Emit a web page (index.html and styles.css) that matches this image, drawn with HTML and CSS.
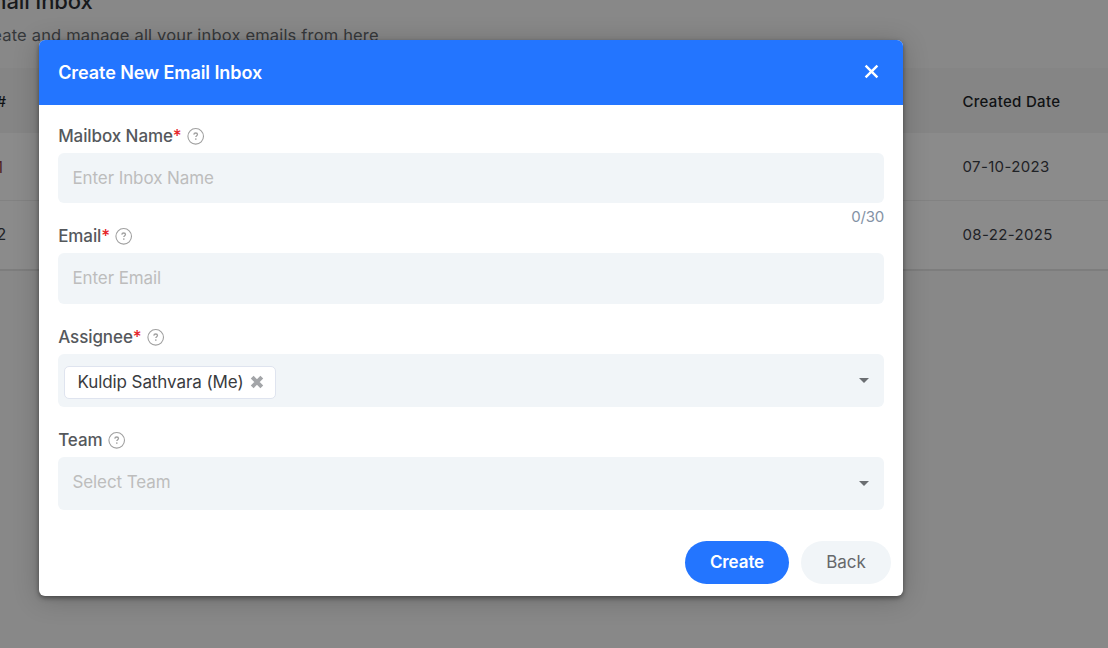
FILE: index.html
```html
<!DOCTYPE html>
<html lang="en">
<head>
<meta charset="utf-8">
<title>Email Inbox</title>
<link rel="stylesheet" href="styles.css">
</head>
<body>
<svg class="sprite" width="0" height="0">
  <symbol id="help" viewBox="0 0 18 18"><circle cx="8.7" cy="9.3" r="7.8" fill="none" stroke="#a0a0a0" stroke-width="1.1"/><path d="M6.8 7.6C6.9 6.6 7.6 6 8.7 6s1.8.6 1.8 1.5c0 1.1-1.7 1.3-1.7 2.6" fill="none" stroke="#a0a0a0" stroke-width="1.3"/><circle cx="8.8" cy="12" r=".85" fill="#a0a0a0"/></symbol>
</svg>
<main class="page">
  <header class="intro">
    <h1 class="page-title">Email Inbox</h1>
    <p class="subtitle">Create and manage all your inbox emails from here</p>
  </header>
  <section class="table">
    <div class="row head"><span class="num">#</span><span class="date">Created Date</span></div>
    <div class="row first"><span class="num link">1</span><span class="date">07-10-2023</span></div>
    <div class="row last"><span class="num">2</span><span class="date">08-22-2025</span></div>
  </section>
</main>
<div class="modal" role="dialog">
  <header class="modal-head">
    <h2 class="modal-title">Create New Email Inbox</h2>
    <svg class="close" width="15" height="15" viewBox="0 0 15 15"><path d="M1.6 1.6l11.8 11.8M13.4 1.6L1.6 13.4" stroke="#fff" stroke-width="2.4"/></svg>
  </header>
  <form class="form">
    <div class="field mailbox">
      <div class="label"><span class="name">Mailbox Name<b class="req">*</b></span><svg class="help"><use href="#help"/></svg></div>
      <div class="input"><span class="hint">Enter Inbox Name</span></div>
      <div class="count">0/30</div>
    </div>
    <div class="field email">
      <div class="label"><span class="name">Email<b class="req">*</b></span><svg class="help"><use href="#help"/></svg></div>
      <div class="input tall"><span class="hint">Enter Email</span></div>
    </div>
    <div class="field assignee">
      <div class="label"><span class="name">Assignee<b class="req">*</b></span><svg class="help"><use href="#help"/></svg></div>
      <div class="input select chips"><span class="chip">Kuldip Sathvara (Me)<svg class="remove" width="14" height="14" viewBox="0 0 14 14"><path d="M2.2 2.2l9.6 9.6M11.8 2.2l-9.6 9.6" stroke="#a3a5a8" stroke-width="4"/></svg></span><i class="caret"></i></div>
    </div>
    <div class="field team">
      <div class="label"><span class="name">Team</span><svg class="help"><use href="#help"/></svg></div>
      <div class="input select"><span class="hint">Select Team</span><i class="caret"></i></div>
    </div>
    <div class="actions"><button type="button" class="btn primary">Create</button><button type="button" class="btn">Back</button></div>
  </form>
</div>
</body>
</html>
```
FILE: styles.css
```css
* { box-sizing: border-box; }
body { margin: 0; width: 1108px; height: 648px; overflow: hidden; background: #888; font-family: Inter, sans-serif; font-size: 16px; color: #1f2226; }
h1, h2, p { margin: 0; }
.sprite { display: block; position: absolute; }
.page { height: 648px; overflow: hidden; }
.intro { height: 68px; width: 600px; overflow: hidden; margin-left: -26px; }
.page-title { margin-top: -13px; font-size: 22px; font-weight: 500; line-height: 28px; letter-spacing: -.15px; color: #17191c; white-space: nowrap; }
.subtitle { margin-top: 10px; font-size: 16.5px; line-height: 20px; letter-spacing: .17px; color: #36383b; }
.table { background: #8b8b8b; height: 203px; border-bottom: 2px solid #7d7d7d; }
.row { display: flex; justify-content: space-between; align-items: center; height: 68px; border-bottom: 1px solid #828282; }
.head { height: 65px; padding-top: 2px; background: #858585; border: 0; font-weight: 500; color: #101214; font-size: 15px; }
.last { border: 0; padding-bottom: 2px; }
.num { margin-left: -3.5px; }
.link { color: #501f24; }
.date { width: 145.5px; font-size: 15px; letter-spacing: .36px; }
.head .date { letter-spacing: .3px; }
.modal { position: absolute; left: 39px; top: 40px; width: 864px; height: 556px; background: #fff; border-radius: 6px; overflow: hidden; box-shadow: 0 2px 5px rgba(0,0,0,.42), 0 3px 26px rgba(0,0,0,.22); }
.modal-head { height: 65px; padding: 0 24px 0 19.2px; display: flex; justify-content: space-between; align-items: center; background: #2375ff; color: #fff; }
.modal-title { font-size: 18px; font-weight: 600; letter-spacing: -.08px; }
.close { margin-bottom: 2px; }
.form { padding: 20px 19px 0; }
.label { height: 22px; padding-left: .2px; display: flex; align-items: center; gap: 5px; color: #55585c; font-size: 17px; font-weight: 500; letter-spacing: -.09px; }
.req { color: #e5252a; font-weight: 500; }
.help { width: 18px; height: 18px; }
.input { height: 50px; margin-top: 6px; padding: 0 14.4px; display: flex; align-items: center; background: #f1f5f8; border-radius: 6px; font-size: 17px; letter-spacing: -.08px; }
.tall { height: 51px; padding-bottom: 1px; }
.hint { color: #bdbdbd; }
.mailbox { height: 100px; }
.email { height: 101px; }
.assignee { height: 103px; }
.count { margin-top: 5px; line-height: 18px; font-size: 15px; letter-spacing: -.2px; text-align: right; color: #8492a5; }
.select { height: 53px; justify-content: space-between; padding-bottom: 3px; }
.chips { padding: 3px 14.4px 0 6px; }
.chip { height: 33px; padding: 0 11px 0 12.4px; display: flex; align-items: center; gap: 6px; border: 1px solid #dfe4ef; border-radius: 5px; background: #fff; color: #393b3e; }
.caret { border: 5px solid transparent; border-top-color: #6b6e72; border-bottom: 0; margin: 3px .6px 0 0; }
.chips .caret { margin: 0 .6px 3px 0; }
.actions { margin: 31px -7px 0 0; display: flex; justify-content: flex-end; gap: 12px; }
.btn { width: 90px; height: 43px; padding: 0 0 1px; border: 0; border-radius: 22px; background: #f1f5f8; color: #66686b; font: 400 17px Inter, sans-serif; }
.primary { width: 104px; background: #2375ff; color: #fff; font-weight: 600; letter-spacing: -.1px; }
```
